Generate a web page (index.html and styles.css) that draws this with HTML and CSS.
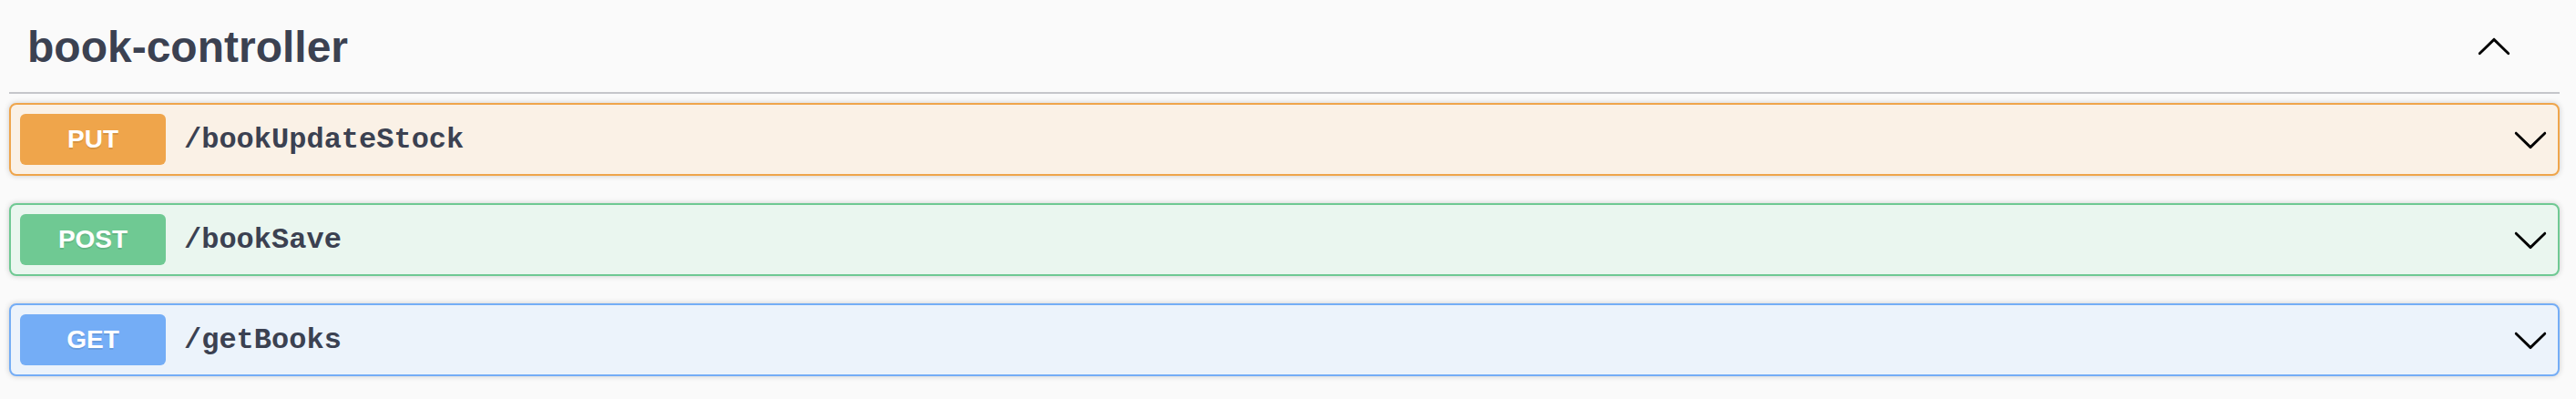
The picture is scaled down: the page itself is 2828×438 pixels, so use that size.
FILE: index.html
```html
<!DOCTYPE html>
<html lang="en">
<head>
<meta charset="utf-8">
<title>book-controller</title>
<link rel="stylesheet" href="styles.css">
</head>
<body>
<div class="tag-section">
  <h3 class="opblock-tag">
    <span class="tag-name">book-controller</span>
    <button class="expand-operation" aria-label="collapse">
      <svg class="arrow" viewBox="0 0 20 20" width="40" height="40"><path d="M17.418 13.891c.272.268.709.268.979 0s.271-.701 0-.969l-7.908-7.83c-.27-.268-.707-.268-.979 0l-7.908 7.83c-.27.268-.27.701 0 .969.271.268.709.268.979 0L10 6.75l7.418 7.141z"/></svg>
    </button>
  </h3>

  <div class="opblock opblock-put">
    <div class="opblock-summary">
      <span class="method">PUT</span>
      <span class="path">/bookUpdateStock</span>
      <svg class="arrow" viewBox="0 0 20 20" width="40" height="40"><path d="M17.418 6.109c.272-.268.709-.268.979 0s.271.701 0 .969l-7.908 7.83c-.27.268-.707.268-.979 0l-7.908-7.83c-.27-.268-.27-.701 0-.969.271-.268.709-.268.979 0L10 13.25l7.418-7.141z"/></svg>
    </div>
  </div>

  <div class="opblock opblock-post">
    <div class="opblock-summary">
      <span class="method">POST</span>
      <span class="path">/bookSave</span>
      <svg class="arrow" viewBox="0 0 20 20" width="40" height="40"><path d="M17.418 6.109c.272-.268.709-.268.979 0s.271.701 0 .969l-7.908 7.83c-.27.268-.707.268-.979 0l-7.908-7.83c-.27-.268-.27-.701 0-.969.271-.268.709-.268.979 0L10 13.25l7.418-7.141z"/></svg>
    </div>
  </div>

  <div class="opblock opblock-get">
    <div class="opblock-summary">
      <span class="method">GET</span>
      <span class="path">/getBooks</span>
      <svg class="arrow" viewBox="0 0 20 20" width="40" height="40"><path d="M17.418 6.109c.272-.268.709-.268.979 0s.271.701 0 .969l-7.908 7.83c-.27.268-.707.268-.979 0l-7.908-7.83c-.27-.268-.27-.701 0-.969.271-.268.709-.268.979 0L10 13.25l7.418-7.141z"/></svg>
    </div>
  </div>
</div>
</body>
</html>
```

FILE: styles.css
```css
* { box-sizing: border-box; }

body {
  margin: 0;
  background: #fafafa;
  font-family: "Liberation Sans", Arial, sans-serif;
  color: #3b4151;
}

.tag-section {
  padding: 4px 18px 0 10px;
}

.opblock-tag {
  display: flex;
  align-items: center;
  margin: 0 0 10px;
  padding: 20px 52px 21px 20px;
  border-bottom: 2px solid #c5c6ca;
  font-size: 48px;
  line-height: 56px;
  font-weight: 700;
  color: #3b4151;
}

.tag-name {
  flex: 1;
}

.expand-operation {
  border: none;
  background: none;
  padding: 0;
  margin: 0;
  display: flex;
}

.arrow {
  display: block;
  width: 40px;
  height: 40px;
  fill: #000;
  flex: none;
}

.opblock {
  margin: 0 0 30px;
  border: 2px solid;
  border-radius: 8px;
  box-shadow: 0 0 6px rgba(0, 0, 0, 0.19);
}

.opblock-summary {
  display: flex;
  align-items: center;
  padding: 10px;
}

.method {
  min-width: 160px;
  padding: 12px 0;
  border-radius: 6px;
  text-align: center;
  font-family: "Liberation Sans", Arial, sans-serif;
  font-size: 28px;
  line-height: 32px;
  font-weight: 700;
  color: #fff;
  text-shadow: 0 2px 0 rgba(0, 0, 0, 0.1);
}

.path {
  flex: 1;
  padding: 0 20px;
  font-family: "Liberation Mono", "Courier New", monospace;
  font-size: 32px;
  font-weight: 700;
  color: #3b4151;
}

.opblock-put { border-color: #efa54b; background: #faf1e6; }
.opblock-put .method { background: #efa54b; }

.opblock-post { border-color: #6fc993; background: #eaf6ef; }
.opblock-post .method { background: #6fc993; }

.opblock-get { border-color: #74adf6; background: #ecf3fb; }
.opblock-get .method { background: #74adf6; }
```
